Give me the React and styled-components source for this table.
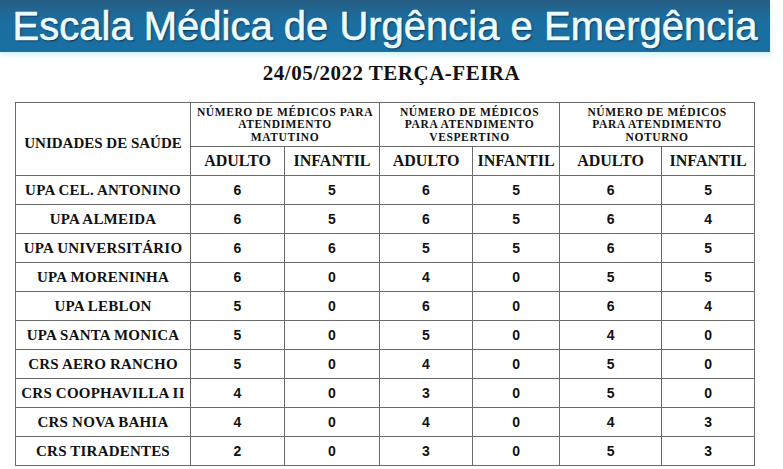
import React from 'react';
import styled, { createGlobalStyle } from 'styled-components';

const GlobalStyle = createGlobalStyle`
  html, body {
    margin: 0;
    padding: 0;
    background: #ffffff;
  }
`;

const rows = [
  ['UPA CEL. ANTONINO', 6, 5, 6, 5, 6, 5],
  ['UPA ALMEIDA', 6, 5, 6, 5, 6, 4],
  ['UPA UNIVERSITÁRIO', 6, 6, 5, 5, 6, 5],
  ['UPA MORENINHA', 6, 0, 4, 0, 5, 5],
  ['UPA LEBLON', 5, 0, 6, 0, 6, 4],
  ['UPA SANTA MONICA', 5, 0, 5, 0, 4, 0],
  ['CRS AERO RANCHO', 5, 0, 4, 0, 5, 0],
  ['CRS COOPHAVILLA II', 4, 0, 3, 0, 5, 0],
  ['CRS NOVA BAHIA', 4, 0, 4, 0, 4, 3],
  ['CRS TIRADENTES', 2, 0, 3, 0, 5, 3],
];

// header lines break where the original document breaks them
const shifts = [
  ['NÚMERO DE MÉDICOS PARA', 'ATENDIMENTO', 'MATUTINO'],
  ['NÚMERO DE MÉDICOS', 'PARA ATENDIMENTO', 'VESPERTINO'],
  ['NÚMERO DE MÉDICOS', 'PARA ATENDIMENTO', 'NOTURNO'],
];

const colWidths = [175, 94, 95, 93, 87, 102, 93];

export default function App() {
  return (
    <Page>
      <GlobalStyle />
      <Banner>
        <BannerTitle>Escala Médica de Urgência e Emergência</BannerTitle>
      </Banner>
      <DateTitle>24/05/2022 TERÇA-FEIRA</DateTitle>
      <Table>
        <colgroup>
          {colWidths.map((w, i) => (
            <col key={i} style={{ width: w }} />
          ))}
        </colgroup>
        <thead>
          <tr>
            <UnitHead rowSpan={2}>UNIDADES DE SAÚDE</UnitHead>
            {shifts.map((lines, i) => (
              <ShiftHead key={i} colSpan={2}>
                {lines.map((l) => (
                  <ShiftLine key={l}>{l}</ShiftLine>
                ))}
              </ShiftHead>
            ))}
          </tr>
          <tr>
            {shifts.map((s, i) => (
              <React.Fragment key={i}>
                <AgeHead>ADULTO</AgeHead>
                <AgeHead>INFANTIL</AgeHead>
              </React.Fragment>
            ))}
          </tr>
        </thead>
        <tbody>
          {rows.map(([name, ...nums]) => (
            <tr key={name}>
              <UnitCell>{name}</UnitCell>
              {nums.map((n, i) => (
                <NumCell key={i}>{n}</NumCell>
              ))}
            </tr>
          ))}
        </tbody>
      </Table>
    </Page>
  );
}

const Page = styled.div`
  width: 783px;
  height: 469px;
  overflow: hidden;
  background: #ffffff;
`;

const Banner = styled.header`
  width: 770px;
  height: 52px;
  display: flex;
  align-items: center;
  justify-content: center;
  background: linear-gradient(180deg, #275c82 0%, #22648f 14%, #1b6ea0 40%, #1a70a3 100%);
  box-shadow: 0 3px 5px rgba(170, 235, 245, 0.6);
`;

const BannerTitle = styled.h1`
  margin: 0;
  font-family: 'Liberation Sans', Arial, sans-serif;
  font-weight: 400;
  font-size: 40px;
  letter-spacing: 0;
  color: #ecfcff;
  -webkit-text-stroke: 0.6px #ecfcff;
  text-shadow: 1px 1px 2px rgba(0, 30, 60, 0.85);
  white-space: nowrap;
`;

const DateTitle = styled.h2`
  margin: 9px 0 0;
  height: 41px;
  text-align: center;
  font-family: 'Liberation Serif', 'Times New Roman', serif;
  font-weight: 700;
  font-size: 21px;
  color: #111111;
  letter-spacing: 0.5px;
`;

const Table = styled.table`
  margin-left: 15px;
  width: 740px;
  table-layout: fixed;
  border-collapse: collapse;
  color: #111111;

  th,
  td {
    border: 1px solid #6a6a6a;
    padding: 0;
    text-align: center;
  }
`;

const UnitHead = styled.th`
  font-family: 'Liberation Serif', 'Times New Roman', serif;
  font-weight: 700;
  font-size: 15px;
  padding-top: 8px !important;
  white-space: nowrap;
`;

const ShiftHead = styled.th`
  height: 43px;
  vertical-align: middle;
`;

const ShiftLine = styled.div`
  font-family: 'Liberation Serif', 'Times New Roman', serif;
  font-weight: 700;
  font-size: 11.5px;
  line-height: 12.5px;
  letter-spacing: 0.6px;
  white-space: nowrap;
`;

const AgeHead = styled.th`
  height: 28px;
  font-family: 'Liberation Serif', 'Times New Roman', serif;
  font-weight: 700;
  font-size: 16px;
`;

const UnitCell = styled.td`
  height: 28px;
  font-family: 'Liberation Serif', 'Times New Roman', serif;
  font-weight: 700;
  font-size: 15px;
  letter-spacing: 0.2px;
  white-space: nowrap;
`;

const NumCell = styled.td`
  font-family: 'Liberation Sans', Arial, sans-serif;
  font-weight: 700;
  font-size: 14px;
`;
